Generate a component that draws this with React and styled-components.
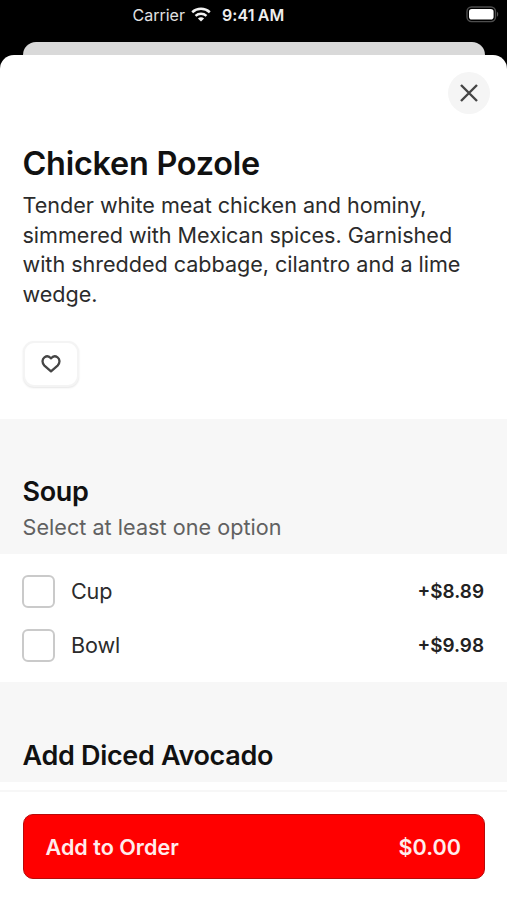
import React, { useState } from 'react';
import styled, { createGlobalStyle } from 'styled-components';

const GlobalStyle = createGlobalStyle`
  * {
    box-sizing: border-box;
  }

  body {
    margin: 0;
    background: #000000;
    font-family: 'Inter', 'Liberation Sans', sans-serif;
    color: #111111;
  }

  h1, h2, p {
    margin: 0;
  }

  button {
    font-family: inherit;
    cursor: pointer;
  }
`;

const Phone = styled.div`
  display: flex;
  flex-direction: column;
  width: 507px;
  height: 900px;
  overflow: hidden;
  background: #000000;
`;

const StatusBar = styled.header`
  display: grid;
  grid-template-columns: 1fr auto;
  align-items: center;
  height: 41.5px;
  padding: 0 8px 12.5px 132.5px;
  color: #ffffff;
`;

const StatusGroup = styled.div`
  display: flex;
  align-items: center;
`;

const Carrier = styled.span`
  font-size: 16px;
  line-height: 20px;
  color: #e2e2e2;
  margin-right: 6px;
`;

const Clock = styled.span`
  font-size: 16px;
  line-height: 20px;
  font-weight: 600;
  letter-spacing: 0.1px;
  word-spacing: -1px;
  color: #eeeeee;
  margin-left: 11px;
`;

const BackCard = styled.div`
  flex: none;
  height: 13.5px;
  margin: 0 22.5px;
  border-radius: 13px 13px 0 0;
  background: #d9d9d9;
`;

const Sheet = styled.main`
  display: flex;
  flex: 1;
  flex-direction: column;
  min-height: 0;
  border-radius: 14px 14px 0 0;
  background: #ffffff;
  overflow: hidden;
`;

const SheetHeader = styled.div`
  display: flex;
  justify-content: flex-end;
  height: 89px;
  flex: none;
  padding: 16.5px 17px 0 0;
`;

const CloseButton = styled.button`
  display: flex;
  align-items: center;
  justify-content: center;
  width: 42.5px;
  height: 42.5px;
  padding: 0;
  border: none;
  border-radius: 50%;
  background: #f5f5f5;
`;

const Intro = styled.section`
  flex: none;
  height: 275px;
  padding: 0 22.5px;
`;

const Title = styled.h1`
  font-size: 32.4px;
  line-height: 40px;
  font-weight: 600;
  letter-spacing: -0.25px;
  margin-bottom: 7px;
`;

const Description = styled.p`
  font-size: 21.6px;
  line-height: 29.74px;
  letter-spacing: -0.03px;
  color: #2b2b2b;
`;

const FavoriteButton = styled.button`
  display: flex;
  align-items: center;
  justify-content: center;
  width: 56.5px;
  height: 46px;
  margin-top: 31px;
  padding: 0;
  border: 2px solid #f4f4f4;
  border-radius: 11px;
  background: #ffffff;
  box-shadow: 0 1px 2px rgba(0, 0, 0, 0.1);
`;

const GroupHeader = styled.div`
  flex: none;
  height: ${({ $height }) => $height};
  padding: ${({ $top }) => $top} 22.5px 0;
  background: #f7f7f7;
`;

const GroupTitle = styled.h2`
  font-size: 27px;
  line-height: 32px;
  font-weight: 600;
  letter-spacing: -0.32px;
`;

const GroupHint = styled.p`
  margin-top: 5px;
  font-size: 21.6px;
  line-height: 29.74px;
  letter-spacing: 0.03px;
  color: #616161;
`;

const OptionList = styled.div`
  display: flex;
  flex: none;
  flex-direction: column;
  gap: 21px;
  height: 128px;
  padding: 20.5px 23px 0 22px;
`;

const Option = styled.label`
  display: flex;
  align-items: center;
  height: 33px;
`;

const Checkbox = styled.input`
  appearance: none;
  flex: none;
  width: 33px;
  height: 33px;
  margin: 0 16px 0 0;
  border: 2px solid #cacaca;
  border-radius: 6px;
  background: #ffffff;

  &:checked {
    background: #ff0000;
  }
`;

const OptionName = styled.span`
  flex: 1;
  font-size: 21.6px;
  line-height: 30px;
  letter-spacing: -0.15px;
  color: #2b2b2b;
`;

const OptionPrice = styled.span`
  padding-top: 2px;
  font-size: 18.9px;
  line-height: 26px;
  font-weight: 600;
  color: #222222;
`;

const Footer = styled.footer`
  flex: 1;
  margin-top: 8px;
  padding: 22.5px 22px 0 22.5px;
  border-top: 2px solid #f7f7f7;
`;

const OrderButton = styled.button`
  display: flex;
  align-items: center;
  justify-content: space-between;
  width: 100%;
  height: 65px;
  padding: 0 23px 0 22px;
  border: 1.4px solid #b80a0a;
  border-radius: 10px;
  background: #ff0000;
  color: #ffecec;
  font-size: 21.6px;
  line-height: 30px;
  font-weight: 600;
`;

const WifiIcon = () => (
  <svg width="20" height="15" viewBox="0 0 20 15" fill="none" stroke="#f2f2f2">
    <path d="M1.2 5.2C6.2 .7 13.8 .7 18.8 5.2" strokeWidth="2.5" />
    <path d="M4.5 8.8C7.7 6 12.3 6 15.5 8.8" strokeWidth="2.4" />
    <path d="M10 14.6L6.9 11.5C8.7 9.9 11.3 9.9 13.1 11.5Z" fill="#f2f2f2" stroke="none" />
  </svg>
);

const BatteryIcon = () => (
  <svg width="33" height="17" viewBox="0 0 33 17">
    <rect x="1" y="1" width="28.5" height="14.6" rx="4.5" fill="none" stroke="#4d4d4d" strokeWidth="1.4" />
    <rect x="3" y="3" width="24.6" height="10.6" rx="2.8" fill="#ffffff" />
    <path d="M31 5.8C32.6 6.5 32.6 10.1 31 10.8Z" fill="#555555" />
  </svg>
);

const CloseIcon = () => (
  <svg width="18" height="18" viewBox="0 0 18 18" stroke="#454545" strokeWidth="2.4">
    <path d="M1 1L17 17M17 1L1 17" />
  </svg>
);

const HeartIcon = () => (
  <svg width="20" height="18" viewBox="0 0 20 18" fill="none" stroke="#454545" strokeWidth="2.3" strokeLinejoin="round">
    <path d="M10 16.4L3.4 10.6C.7 7.9 1.1 4 3.4 2.4C5.7 .8 8.4 1.4 10 3.4C11.6 1.4 14.3 .8 16.6 2.4C18.9 4 19.3 7.9 16.6 10.6Z" />
  </svg>
);

const soupOptions = [
  { name: 'Cup', price: 8.89 },
  { name: 'Bowl', price: 9.98 },
];

const App = () => {
  const [selected, setSelected] = useState([]);

  const toggle = (name) => {
    setSelected((prev) =>
      prev.includes(name) ? prev.filter((item) => item !== name) : [...prev, name]
    );
  };

  const total = soupOptions
    .filter((option) => selected.includes(option.name))
    .reduce((sum, option) => sum + option.price, 0);

  return (
    <>
      <GlobalStyle />
      <Phone>
        <StatusBar>
          <StatusGroup>
            <Carrier>Carrier</Carrier>
            <WifiIcon />
            <Clock>9:41 AM</Clock>
          </StatusGroup>
          <BatteryIcon />
        </StatusBar>
        <BackCard />
        <Sheet>
          <SheetHeader>
            <CloseButton aria-label="Close">
              <CloseIcon />
            </CloseButton>
          </SheetHeader>
          <Intro>
            <Title>Chicken Pozole</Title>
            <Description>
              Tender white meat chicken and hominy, simmered with Mexican spices. Garnished
              with shredded cabbage, cilantro and a lime wedge.
            </Description>
            <FavoriteButton aria-label="Favorite">
              <HeartIcon />
            </FavoriteButton>
          </Intro>
          <GroupHeader $height="135px" $top="57px">
            <GroupTitle>Soup</GroupTitle>
            <GroupHint>Select at least one option</GroupHint>
          </GroupHeader>
          <OptionList>
            {soupOptions.map((option) => (
              <Option key={option.name}>
                <Checkbox
                  type="checkbox"
                  checked={selected.includes(option.name)}
                  onChange={() => toggle(option.name)}
                />
                <OptionName>{option.name}</OptionName>
                <OptionPrice>+${option.price.toFixed(2)}</OptionPrice>
              </Option>
            ))}
          </OptionList>
          <GroupHeader $height="99.5px" $top="58px">
            <GroupTitle>Add Diced Avocado</GroupTitle>
          </GroupHeader>
          <Footer>
            <OrderButton>
              <span>Add to Order</span>
              <span>${total.toFixed(2)}</span>
            </OrderButton>
          </Footer>
        </Sheet>
      </Phone>
    </>
  );
};

export default App;
